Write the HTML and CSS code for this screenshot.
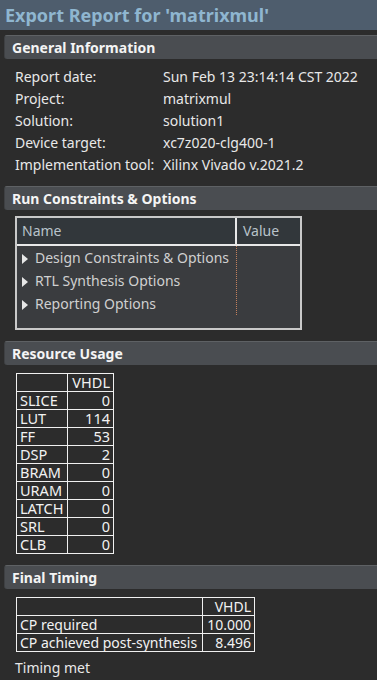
FILE: index.html
```html
<!DOCTYPE html>
<html lang="en">
<head>
  <meta charset="UTF-8">
  <meta name="viewport" content="width=device-width, initial-scale=1.0">
  <title>Export Report</title>
  <link rel="stylesheet" href="styles.css">
</head>
<body>
  <header class="title">Export Report for 'matrixmul'</header>

  <section class="panel">
    <h2 class="panel-head">General Information</h2>
    <div class="panel-body info">
      <span>Report date:</span><span>Sun Feb 13 23:14:14 CST 2022</span>
      <span>Project:</span><span>matrixmul</span>
      <span>Solution:</span><span>solution1</span>
      <span>Device target:</span><span>xc7z020-clg400-1</span>
      <span>Implementation tool:</span><span>Xilinx Vivado v.2021.2</span>
    </div>
  </section>

  <section class="panel">
    <h2 class="panel-head">Run Constraints &amp; Options</h2>
    <div class="panel-body">
      <div class="tree">
        <div class="tree-head">
          <div class="tree-name">Name</div>
          <div class="tree-value">Value</div>
        </div>
        <div class="tree-rows">
          <div class="tree-row"><span class="arrow"></span>Design Constraints &amp; Options</div>
          <div class="tree-row"><span class="arrow"></span>RTL Synthesis Options</div>
          <div class="tree-row"><span class="arrow"></span>Reporting Options</div>
        </div>
      </div>
    </div>
  </section>

  <section class="panel">
    <h2 class="panel-head">Resource Usage</h2>
    <div class="panel-body">
      <table class="grid resources">
        <tr><th></th><th>VHDL</th></tr>
        <tr><td>SLICE</td><td>0</td></tr>
        <tr><td>LUT</td><td>114</td></tr>
        <tr><td>FF</td><td>53</td></tr>
        <tr><td>DSP</td><td>2</td></tr>
        <tr><td>BRAM</td><td>0</td></tr>
        <tr><td>URAM</td><td>0</td></tr>
        <tr><td>LATCH</td><td>0</td></tr>
        <tr><td>SRL</td><td>0</td></tr>
        <tr><td>CLB</td><td>0</td></tr>
      </table>
    </div>
  </section>

  <section class="panel">
    <h2 class="panel-head">Final Timing</h2>
    <div class="panel-body">
      <table class="grid timing">
        <tr><th></th><th>VHDL</th></tr>
        <tr><td>CP required</td><td>10.000</td></tr>
        <tr><td>CP achieved post-synthesis</td><td>8.496</td></tr>
      </table>
      <p class="note">Timing met</p>
    </div>
  </section>
</body>
</html>
```

FILE: styles.css
```css
body {
  margin: 0;
  background-color: #2c2c2c;
  color: #e8e8e8;
  font-family: "Noto Sans", "DejaVu Sans", sans-serif;
  font-size: 14px;
  overflow: hidden;
}

.title {
  height: 30px;
  line-height: 30px;
  padding-left: 5px;
  background-color: #4e5d6d;
  color: #8fb6d0;
  font-size: 18px;
  font-weight: bold;
}

.panel-head {
  margin: 5px 0 0 4px;
  height: 23px;
  line-height: 23px;
  padding-left: 7px;
  border-top: 1px solid #5e6164;
  border-left: 1px solid #3e4043;
  border-radius: 3px 0 0 3px;
  background-color: #4a4d51;
  color: #f4f4f4;
  font-size: 14px;
  font-weight: bold;
}

.panel-body {
  padding: 6px 0 2px 15px;
}

.info {
  display: grid;
  grid-template-columns: 148px auto;
  grid-auto-rows: 22px;
  align-items: center;
  white-space: nowrap;
}

.panel + .panel .panel-head {
  margin-top: 9px;
}

/* tree view */
.tree {
  width: 283px;
  height: 110px;
  border: 2px solid #c9c9c9;
  background-color: #3a3c3f;
}

.tree-head {
  display: flex;
  height: 26px;
  border-bottom: 2px solid #e8e8e8;
  background-color: #32373b;
  color: #b9c3ca;
  font-size: 14px;
  line-height: 26px;
}

.tree-name {
  width: 213px;
  padding-left: 5px;
  border-right: 2px solid #e8e8e8;
}

.tree-value {
  padding-left: 6px;
}

.tree-rows {
  width: 219px;
  border-right: 1px dotted #c4805c;
}

.tree-row {
  height: 23px;
  line-height: 23px;
  padding-left: 5px;
  color: #d0d0d0;
  font-size: 14px;
  white-space: nowrap;
}

.arrow {
  display: inline-block;
  width: 0;
  height: 0;
  margin-right: 7px;
  border-top: 5px solid transparent;
  border-bottom: 5px solid transparent;
  border-left: 6px solid #e6e6e6;
  vertical-align: -1px;
}

/* plain tables */
.grid {
  margin-top: 2px;
  margin-left: 1px;
  border-collapse: collapse;
  color: #f2f2f2;
  font-size: 14.5px;
}

.grid th,
.grid td {
  height: 17px;
  padding: 0 3px;
  border: 1px solid #f0f0f0;
  line-height: 17px;
  white-space: nowrap;
  font-weight: normal;
}

.grid td:first-child {
  text-align: left;
}

.grid td + td,
.grid th + th {
  text-align: right;
}

.resources td:first-child {
  width: 44px;
}

.resources td + td {
  width: 39px;
}

.timing {
  font-size: 14px;
}

.timing td:first-child {
  width: 179px;
}

.timing td + td {
  width: 45px;
}

.note {
  margin: 6px 0 0 0;
  font-size: 14px;
  line-height: 20px;
}
```
